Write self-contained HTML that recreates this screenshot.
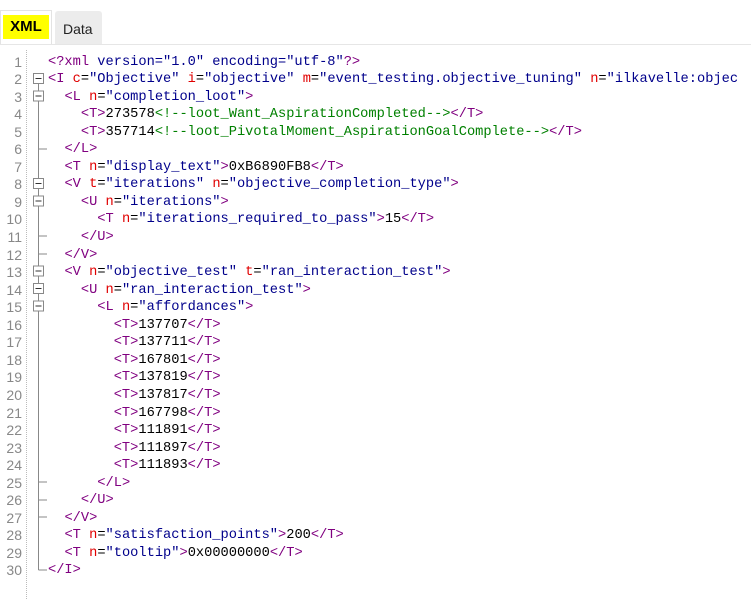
<!DOCTYPE html><html><head><style>
body{margin:0;width:751px;height:599px;background:#fff;overflow:hidden;position:relative;font-family:"Liberation Mono",monospace}
.tab{position:absolute;font-family:"Liberation Sans",sans-serif;font-size:14px}
#t1{left:0;top:10px;width:50px;height:34px;background:#fff;border:1px solid #e3e3e3;border-bottom:none}
#t1 span{position:absolute;left:2px;top:4px;width:46px;height:24px;line-height:24px;text-align:center;background:#ffff00;font-weight:bold;font-size:15px;color:#000}
#t2{left:55px;top:11px;width:47px;height:33px;background:#ececec;border-radius:3px 3px 0 0}
#t2 span{position:absolute;left:8px;top:10px;color:#222}
#bar{position:absolute;left:0;right:0;top:44px;height:1px;background:#e6e6e6}
#sep{position:absolute;left:26px;top:50px;height:549px;border-left:1px dotted #bbb}
#code{position:absolute;left:0;top:0;width:751px;height:599px;overflow:hidden}
.ln{position:absolute;left:0;width:22px;text-align:right;font-family:"Liberation Sans",sans-serif;font-size:14px;color:#888}
.l{position:absolute;left:48px;right:0;overflow:hidden;font-size:13.7px;white-space:pre;color:#000}
.t{color:#800080}.a{color:#e00000}.s{color:#00008b}.c{color:#008000}
</style></head><body>
<div class="tab" id="t1"><span>XML</span></div>
<div class="tab" id="t2"><span>Data</span></div>
<div id="bar"></div><div id="sep"></div>
<svg style="position:absolute;left:0;top:0" width="60" height="599">
<g stroke="#888" fill="none" stroke-width="1">
<line x1="38.5" y1="84" x2="38.5" y2="570"/>
<path d="M38.5 570H47M38.5 149H47M38.5 236H47M38.5 254H47M38.5 482H47M38.5 500H47M38.5 517H47"/>
<g fill="#fff">
<rect x="33.5" y="73.5" width="10" height="10"/><rect x="33.5" y="91" width="10" height="10"/>
<rect x="33.5" y="178.5" width="10" height="10"/><rect x="33.5" y="196" width="10" height="10"/>
<rect x="33.5" y="266" width="10" height="10"/><rect x="33.5" y="283.5" width="10" height="10"/><rect x="33.5" y="301" width="10" height="10"/>
</g>
<path stroke="#333" d="M35.5 78.5h6M35.5 96h6M35.5 183.5h6M35.5 201h6M35.5 271h6M35.5 288.5h6M35.5 306h6"/>
</g></svg>
<div id="code"></div>
<script>
const L=[
'<span class=t>&lt;?xml</span> <span class=s>version="1.0" encoding="utf-8"</span><span class=t>?&gt;</span>',
'<span class=t>&lt;I</span> <span class=a>c</span>=<span class=s>"Objective"</span> <span class=a>i</span>=<span class=s>"objective"</span> <span class=a>m</span>=<span class=s>"event_testing.objective_tuning"</span> <span class=a>n</span>=<span class=s>"ilkavelle:objec</span>',
'  <span class=t>&lt;L</span> <span class=a>n</span>=<span class=s>"completion_loot"</span><span class=t>&gt;</span>',
'    <span class=t>&lt;T&gt;</span>273578<span class=c>&lt;!--loot_Want_AspirationCompleted--&gt;</span><span class=t>&lt;/T&gt;</span>',
'    <span class=t>&lt;T&gt;</span>357714<span class=c>&lt;!--loot_PivotalMoment_AspirationGoalComplete--&gt;</span><span class=t>&lt;/T&gt;</span>',
'  <span class=t>&lt;/L&gt;</span>',
'  <span class=t>&lt;T</span> <span class=a>n</span>=<span class=s>"display_text"</span><span class=t>&gt;</span>0xB6890FB8<span class=t>&lt;/T&gt;</span>',
'  <span class=t>&lt;V</span> <span class=a>t</span>=<span class=s>"iterations"</span> <span class=a>n</span>=<span class=s>"objective_completion_type"</span><span class=t>&gt;</span>',
'    <span class=t>&lt;U</span> <span class=a>n</span>=<span class=s>"iterations"</span><span class=t>&gt;</span>',
'      <span class=t>&lt;T</span> <span class=a>n</span>=<span class=s>"iterations_required_to_pass"</span><span class=t>&gt;</span>15<span class=t>&lt;/T&gt;</span>',
'    <span class=t>&lt;/U&gt;</span>',
'  <span class=t>&lt;/V&gt;</span>',
'  <span class=t>&lt;V</span> <span class=a>n</span>=<span class=s>"objective_test"</span> <span class=a>t</span>=<span class=s>"ran_interaction_test"</span><span class=t>&gt;</span>',
'    <span class=t>&lt;U</span> <span class=a>n</span>=<span class=s>"ran_interaction_test"</span><span class=t>&gt;</span>',
'      <span class=t>&lt;L</span> <span class=a>n</span>=<span class=s>"affordances"</span><span class=t>&gt;</span>'];
['137707','137711','167801','137819','137817','167798','111891','111897','111893'].forEach(v=>L.push('        <span class=t>&lt;T&gt;</span>'+v+'<span class=t>&lt;/T&gt;</span>'));
L.push('      <span class=t>&lt;/L&gt;</span>','    <span class=t>&lt;/U&gt;</span>','  <span class=t>&lt;/V&gt;</span>',
'  <span class=t>&lt;T</span> <span class=a>n</span>=<span class=s>"satisfaction_points"</span><span class=t>&gt;</span>200<span class=t>&lt;/T&gt;</span>',
'  <span class=t>&lt;T</span> <span class=a>n</span>=<span class=s>"tooltip"</span><span class=t>&gt;</span>0x00000000<span class=t>&lt;/T&gt;</span>',
'<span class=t>&lt;/I&gt;</span>');
let h='';L.forEach((s,i)=>{const y=53.5+i*17.55;h+=`<div class=ln style="top:${y}px;line-height:17.55px">${i+1}</div><div class=l style="top:${y}px;line-height:17.55px">${s}</div>`});
document.getElementById('code').innerHTML=h;
</script>
</body></html>
